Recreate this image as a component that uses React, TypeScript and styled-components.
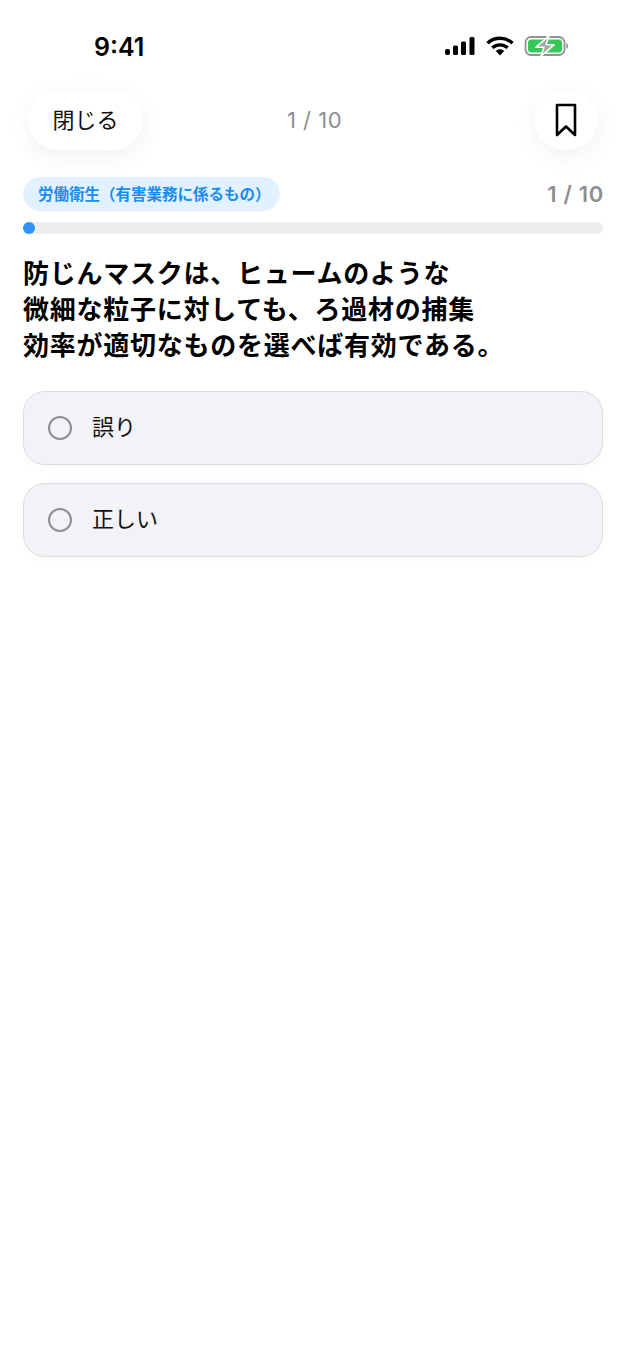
import React from 'react';
import styled, { createGlobalStyle } from 'styled-components';

const CJK = `Inter, "Noto Sans CJK JP", sans-serif`;

const GlobalStyle = createGlobalStyle`
  html, body {
    margin: 0;
    padding: 0;
    background: #fff;
  }
  body {
    font-family: ${CJK};
  }
`;

const options = ['誤り', '正しい'];

const App = () => {
  return (
    <Screen>
      <GlobalStyle />
      <StatusBar>
        <Time>9:41</Time>
        <StatusIcons>
          <svg width="32" height="20" viewBox="0 0 32 20">
            <rect x="1" y="13" width="5" height="6" rx="2" fill="#000" />
            <rect x="9" y="9.5" width="5" height="9.5" rx="1.5" fill="#000" />
            <rect x="17" y="5.5" width="5" height="13.5" rx="1.5" fill="#000" />
            <rect x="25.5" y="1" width="5" height="18" rx="1.5" fill="#000" />
          </svg>
          <svg width="28" height="20" viewBox="0 0 28 20">
            <path d="M1.5 7.2 C8.5 0.6 19.5 0.6 26.5 7.2" fill="none" stroke="#000" strokeWidth="3.4" />
            <path d="M6.3 11.8 C10.8 7.9 17.2 7.9 21.7 11.8" fill="none" stroke="#000" strokeWidth="3.4" />
            <path d="M9.8 15 C12.4 12.8 15.6 12.8 18.2 15 L14 19.4 Z" fill="#000" />
          </svg>
          <svg width="46" height="22" viewBox="0 0 45 22">
            <rect x="1" y="2" width="39" height="18" rx="5.5" fill="none" stroke="#8f9490" strokeWidth="1.8" />
            <rect x="3.5" y="4.5" width="34" height="13" rx="3.5" fill="#35c759" />
            <path d="M41.8 8 C44 8.6 44 13.4 41.8 14 Z" fill="#8f9490" />
            <path d="M24.5 0.8 L11.5 12.2 H19.5 L16.5 21.2 L29.5 9.8 H21.5 Z" fill="#a3a6a4" stroke="#fff" strokeWidth="1.6" strokeLinejoin="round" />
          </svg>
        </StatusIcons>
      </StatusBar>

      <Header>
        <CloseButton>閉じる</CloseButton>
        <HeaderCount>1 / 10</HeaderCount>
        <BookmarkButton>
          <svg width="24" height="34" viewBox="0 0 24 34">
            <path
              d="M3 2 H21 V32 L12 23.5 L3 32 Z"
              fill="none"
              stroke="#000"
              strokeWidth="2.6"
              strokeLinejoin="round"
            />
          </svg>
        </BookmarkButton>
      </Header>

      <Content>
        <MetaRow>
          <Category>労働衛生（有害業務に係るもの）</Category>
          <Count>1 / 10</Count>
        </MetaRow>
        <Track>
          <Fill />
        </Track>
        <Question>
          防じんマスクは、ヒュームのような
          <br />
          微細な粒子に対しても、ろ過材の捕集
          <br />
          効率が適切なものを選べば有効である。
        </Question>
        <OptionList>
          {options.map((label) => (
            <Option key={label}>
              <Radio />
              <OptionLabel>{label}</OptionLabel>
            </Option>
          ))}
        </OptionList>
      </Content>
    </Screen>
  );
};

export default App;

const Screen = styled.div`
  width: 626px;
  height: 1360px;
  background: #fff;
  overflow: hidden;
`;
const StatusBar = styled.div`
  height: 90px;
  box-sizing: border-box;
  padding: 33px 57px 0 94px;
  display: flex;
  justify-content: space-between;
  align-items: flex-start;
`;
const Time = styled.div`
  font-family: Inter, sans-serif;
  font-size: 25px;
  line-height: 29px;
  font-weight: 600;
  color: #000;
`;
const StatusIcons = styled.div`
  display: flex;
  align-items: center;
  gap: 10px;
  height: 26px;
  margin-right: -1px;
`;
const Header = styled.div`
  height: 60px;
  padding: 0 28px;
  display: grid;
  grid-template-columns: 1fr auto 1fr;
  align-items: center;
`;
const CloseButton = styled.div`
  justify-self: start;
  width: 115px;
  height: 60px;
  box-sizing: border-box;
  padding-bottom: 4px;
  border-radius: 30px;
  background: #fff;
  box-shadow: 0 6px 24px rgba(0, 0, 0, 0.06);
  display: flex;
  align-items: center;
  justify-content: center;
  font-size: 22px;
  color: #111;
`;
const HeaderCount = styled.div`
  font-size: 22px;
  letter-spacing: 0.5px;
  margin-left: 3px;
  color: #8e8e93;
`;
const BookmarkButton = styled.div`
  justify-self: end;
  width: 64px;
  height: 60px;
  border-radius: 50%;
  background: #fff;
  box-shadow: 0 6px 24px rgba(0, 0, 0, 0.06);
  display: flex;
  align-items: center;
  justify-content: center;
`;
const Content = styled.div`
  padding: 27px 23px 0;
`;
const MetaRow = styled.div`
  display: flex;
  align-items: center;
  justify-content: space-between;
`;
const Category = styled.div`
  height: 34px;
  box-sizing: border-box;
  padding: 0 9px 2px 15px;
  border-radius: 17px;
  background: #e1f1ff;
  color: #1a8cf0;
  font-size: 15.5px;
  font-weight: 600;
  display: flex;
  align-items: center;
`;
const Count = styled.div`
  font-size: 22px;
  font-weight: 600;
  letter-spacing: 0.7px;
  margin-right: -1px;
  color: #8e8e93;
`;
const Track = styled.div`
  height: 12px;
  margin-top: 11px;
  border-radius: 6px;
  background: #ececec;
`;
const Fill = styled.div`
  width: 12px;
  height: 12px;
  border-radius: 50%;
  background: #2f93fb;
`;
const Question = styled.div`
  margin-top: 22px;
  font-size: 26px;
  line-height: 36px;
  font-weight: 700;
  letter-spacing: 0.75px;
  color: #000;
`;
const OptionList = styled.div`
  margin-top: 26.5px;
  display: flex;
  flex-direction: column;
  gap: 18px;
`;
const Option = styled.div`
  height: 74px;
  box-sizing: border-box;
  padding: 0 24px;
  border: 1.5px solid #dcdce0;
  border-radius: 22px;
  background: #f2f2f7;
  box-shadow: 0 4px 12px rgba(0, 0, 0, 0.02);
  display: flex;
  align-items: center;
  gap: 20px;
`;
const Radio = styled.div`
  width: 24px;
  height: 24px;
  box-sizing: border-box;
  border: 2px solid #8e8e93;
  border-radius: 50%;
`;
const OptionLabel = styled.div`
  font-size: 22px;
  padding-bottom: 6px;
  color: #111;
`;
